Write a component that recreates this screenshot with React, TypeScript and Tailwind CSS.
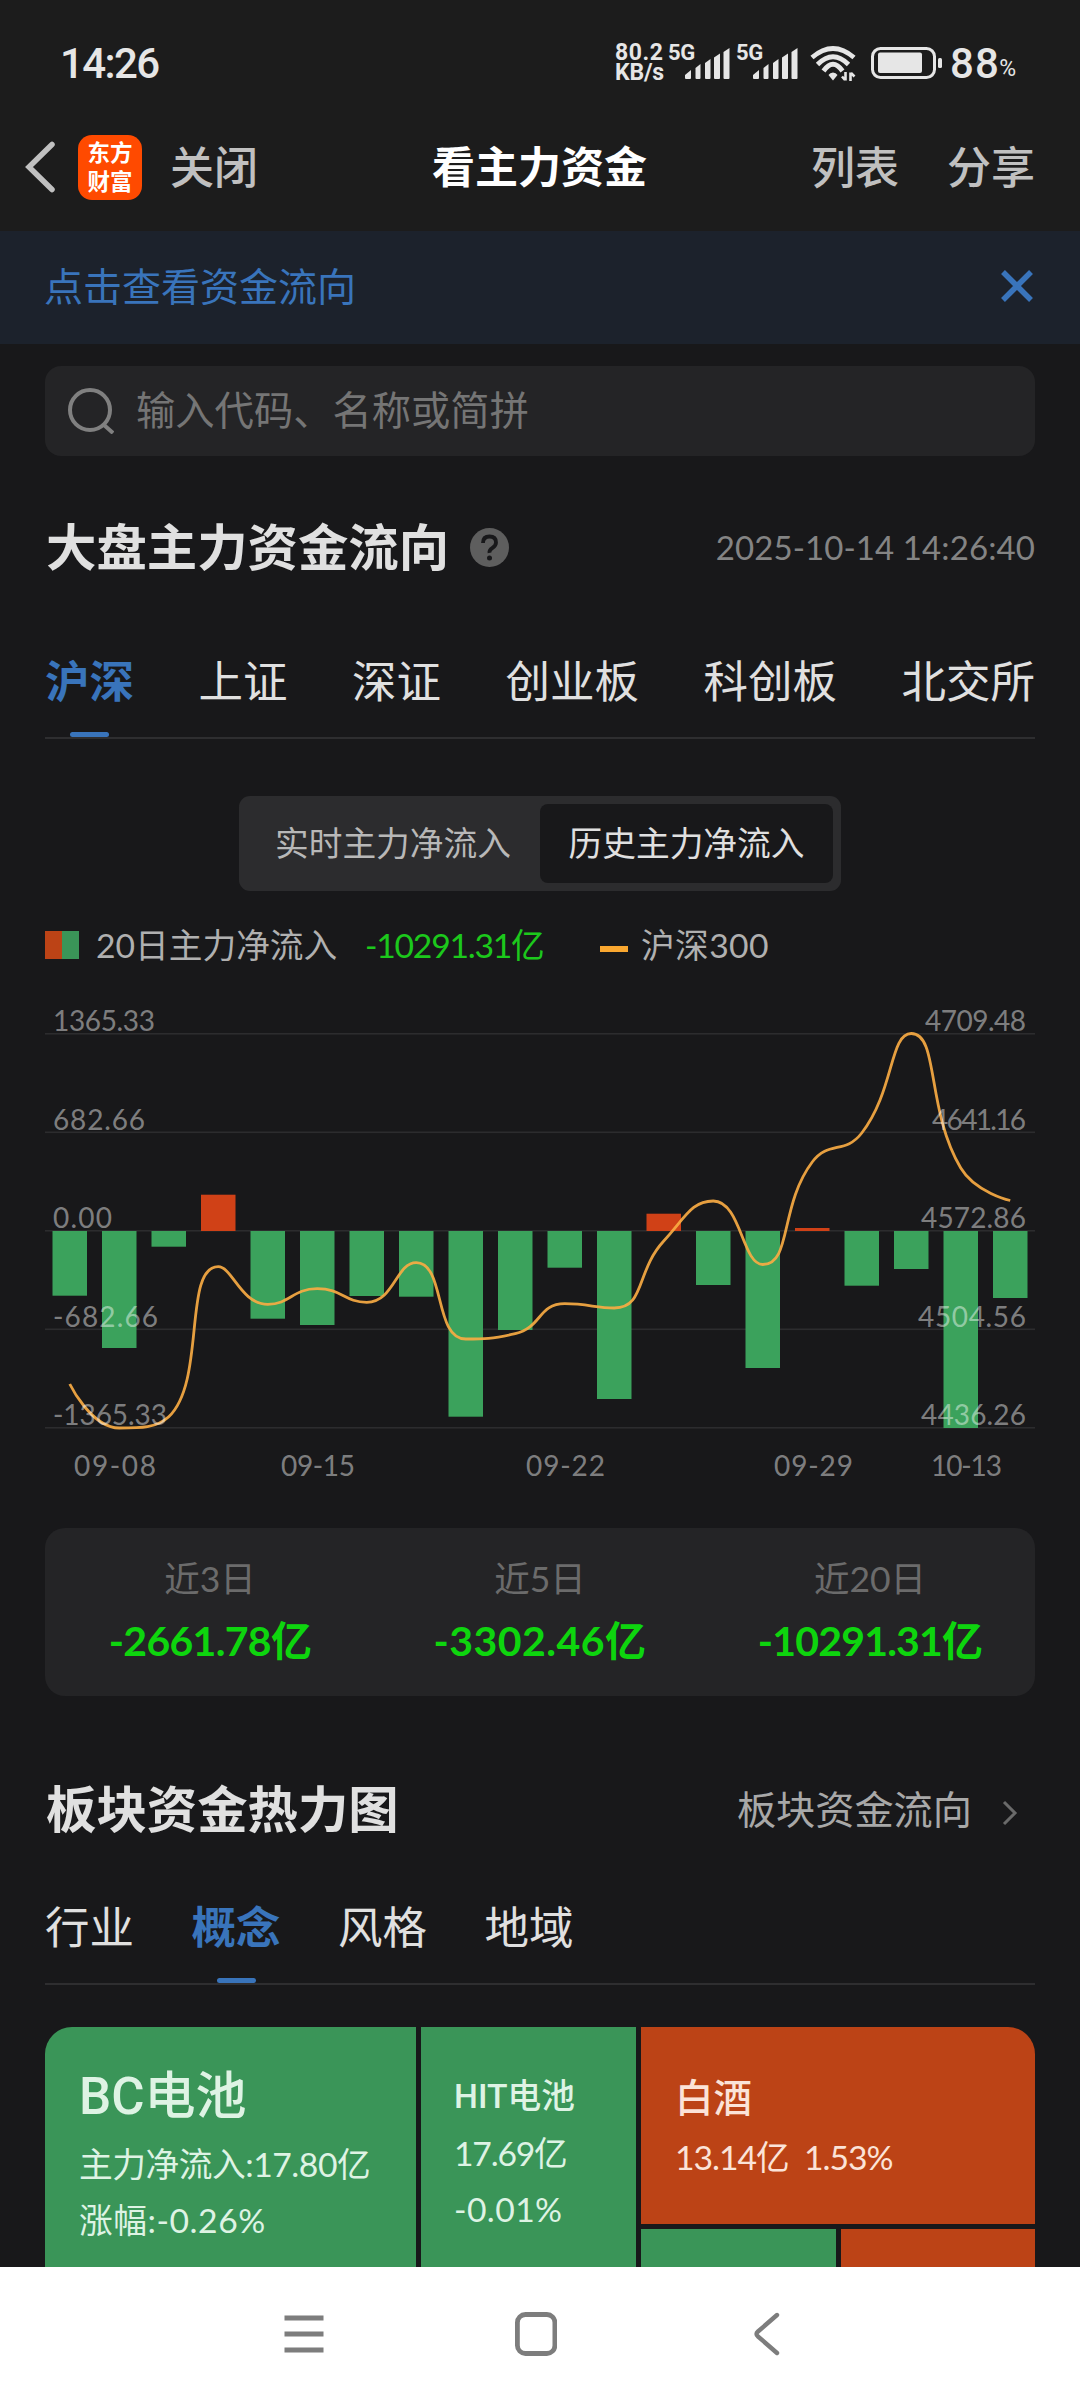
import type { ReactNode } from "react"

const FONT = "font-['Lato','Noto_Sans_CJK_SC',sans-serif]"

/* ================= STATUS BAR ================= */

function Signal() {
  return (
    <div className="flex w-[68px]">
      <span className="-mt-[1px] h-[20px] text-[22px] leading-[20px] font-bold tracking-[-0.3px]">5G</span>
      <svg className="-ml-[10px] h-[36px] w-[46px] shrink-0" viewBox="0 0 46 36" fill="#e6e6e6">
        <path d="M0 34v-3l6-5v8q0 1-1 1H1q-1 0-1-1z" />
        <path d="M10.500 24l5-4v14q0 1-1 1h-3q-1 0-1-1z" />
        <path d="M20 19l5.500-4v19q0 1-1 1H21q-1 0-1-1z" />
        <path d="M29 13.500l6-4V34q0 1-1 1h-4q-1 0-1-1z" />
        <path d="M38.500 8l6-4v30q0 1-1 1h-4q-1 0-1-1z" />
      </svg>
    </div>
  )
}

function StatusBar() {
  return (
    <div className="flex h-[103px] items-start font-['Roboto',sans-serif] text-[#e6e6e6]">
      <div className="ml-[60px] mt-[40px] w-[121px] text-[42px] leading-[48px] font-medium tracking-[-1.6px]">14:26</div>
      <div className="ml-[434px] mt-[43px] w-[53px] text-[23px] leading-[20px] font-bold">
        <div className="tracking-[0.6px]">80.2</div>
        <div className="tracking-[-0.2px]">KB/s</div>
      </div>
      <div className="mt-[44px] flex">
        <Signal />
        <Signal />
      </div>
      <svg className="ml-[6px] mt-[46px] h-[36px] w-[48px]" viewBox="0 0 48 36" fill="none" stroke="#e6e6e6" strokeWidth="4.800">
        <path d="M2 11.500Q23-6.500 44 11.500" />
        <path d="M7.500 18.500Q23 3 38.500 18.500" />
        <path d="M13.500 25Q23 11.500 32.500 25" />
        <path d="M23 26.500q3 0 4.500 2.500l-4.500 5.500-4.500-5.500q1.500-2.500 4.500-2.500z" fill="#e6e6e6" stroke="none" />
        <path d="M35.500 26v8.500M35 34l-3-3.500M40.500 35v-8.500M41 27l3.500 3.500" strokeWidth="2.600" />
      </svg>
      <svg className="ml-[13px] mt-[47px] h-[32px] w-[72px]" viewBox="0 0 72 32">
        <rect x="1.500" y="1.500" width="62" height="29" rx="8" fill="none" stroke="#e6e6e6" strokeWidth="3" />
        <rect x="7" y="5.500" width="44" height="20.500" rx="2" fill="#e6e6e6" />
        <rect x="67" y="11" width="4" height="10" rx="1.500" fill="#e6e6e6" />
      </svg>
      <div className="ml-[7px] mt-[40px] text-[42px] leading-[48px] tracking-[1.2px] font-medium">88</div>
      <div className="mt-[54px] -ml-[1px] text-[23px] leading-[30px]">%</div>
    </div>
  )
}

/* ================= HEADER ================= */

function Header() {
  return (
    <div className="flex h-[128px] items-center text-[44px] leading-[60px] font-medium text-[#c0c0c0]">
      <svg className="ml-[24px] h-[54px] w-[34px]" viewBox="0 0 34 54" fill="none" stroke="#c0c0c0" strokeWidth="5.500" strokeLinecap="round">
        <path d="M28 4.500L5 27l23 22.500" />
      </svg>
      <div className="ml-[20px] flex h-[65px] w-[64px] flex-col items-center justify-center rounded-[14px] bg-[#ff4a00] text-[22.5px] leading-[29px] font-bold text-white">
        <span>东方</span>
        <span>财富</span>
      </div>
      <div className="ml-[28px] w-[262px]">关闭</div>
      <div className="w-[379px] text-[43px] font-bold text-white">看主力资金</div>
      <div>列表</div>
      <div className="ml-[48px]">分享</div>
    </div>
  )
}

function Notice() {
  return (
    <div className="flex h-[113px] items-center justify-between bg-[#1c222c] pr-[47px] pb-[3px] pl-[44px] text-[39px] text-[#3974bb]">
      <span className="leading-[60px]">点击查看资金流向</span>
      <svg className="h-[32px] w-[32px]" viewBox="0 0 32 32" stroke="#3974bb" strokeWidth="5.500">
        <path d="M2 2l28 28M30 2L2 30" />
      </svg>
    </div>
  )
}

function SearchBox() {
  return (
    <div className="mt-[22px] flex h-[90px] items-center rounded-[16px] bg-[#242426] pl-[23px] text-[39.3px] text-[#757575]">
      <svg className="mr-[22px] h-[46px] w-[46px]" viewBox="0 0 46 46" fill="none" stroke="#808080" strokeWidth="4">
        <circle cx="22" cy="22" r="20" />
        <path d="M36 37l9 8" />
      </svg>
      <span className="pb-[3px] leading-[60px]">输入代码、名称或简拼</span>
    </div>
  )
}

/* ================= TABS ================= */

function Tabs({ items, active, className }: { items: string[]; active: string; className: string }) {
  return (
    <div className={`flex h-[82px] border-b-2 border-[#2e2e30] text-[44.5px] leading-[48px] text-[#e0e0e0] ${className}`}>
      {items.map((item) => (
        <div key={item} className={item === active ? "flex flex-col items-center justify-between font-bold text-[#3974bb]" : ""}>
          {item}
          {item === active && <span className="h-[5px] w-[39px] rounded-full bg-[#3974bb]" />}
        </div>
      ))}
    </div>
  )
}

/* ================= CHART ================= */

const ZERO = 209
// bar ends, in chart pixels
const bars = [
  273.700, 326, 224.700, 172.700, 296.700, 303, 274, 274.700, 394.700, 308,
  245.700, 377, 191.700, 263, 346, 206, 263.700, 247, 406, 276,
]
const index300 = [
  362, 406, 394.700, 244.700, 282.300, 266.700, 280.300, 240.700, 317, 311.700,
  281.700, 286, 219, 179, 242.500, 140, 111, 11.500, 146, 178.500,
]
const axis = [
  { y: 12, left: "1365.33", lw: 100, right: "4709.48", rw: 101 },
  { y: 110.500, left: "682.66", lw: 90, right: "4641.16", rw: 94 },
  { y: 209, left: "0.00", lw: 57, right: "4572.86", rw: 105 },
  { y: 307.500, left: "-682.66", lw: 103, right: "4504.56", rw: 108 },
  { y: 406, left: "-1365.33", lw: 112, right: "4436.26", rw: 105 },
]
const dates = [
  { x: 30, w: 80, text: "09-08" },
  { x: 237, w: 72, text: "09-15" },
  { x: 482, w: 77, text: "09-22" },
  { x: 730, w: 77, text: "09-29" },
  { x: 887, w: 69, text: "10-13" },
]

const clamp = (v: number, a: number, b: number) => Math.min(Math.max(v, Math.min(a, b)), Math.max(a, b))

function smoothPath(values: number[]) {
  const pts = values.map((y, i) => [24.75 + i * 49.5, y])
  const last = pts.length - 1
  let d = `M${pts[0][0]} ${pts[0][1]}`
  let out = pts[0]
  for (let i = 1; i <= last; i++) {
    const p = pts[i]
    const prev = pts[i - 1]
    let cp = p
    let nextOut = p
    if (i < last) {
      const next = pts[i + 1]
      const lenPrev = Math.hypot(p[0] - prev[0], p[1] - prev[1])
      const lenNext = Math.hypot(next[0] - p[0], next[1] - p[1])
      const ratio = lenNext / (lenNext + lenPrev)
      nextOut = [0, 1].map((k) => clamp(p[k] + (next[k] - prev[k]) * 0.5 * ratio, p[k], next[k]))
      cp = [0, 1].map((k) => clamp(p[k] - ((nextOut[k] - p[k]) * lenPrev) / lenNext, p[k], prev[k]))
      nextOut = [0, 1].map((k) => p[k] + ((p[k] - cp[k]) * lenNext) / lenPrev)
    }
    d += `C${out[0]} ${out[1]} ${cp[0]} ${cp[1]} ${p[0]} ${p[1]}`
    out = nextOut
  }
  return d
}

function FlowChart() {
  return (
    <svg className="mt-[53px] h-[470px] w-[990px] shrink-0 overflow-visible" viewBox="0 0 990 470">
      {axis.map((a) => (
        <rect key={a.y} x="0" y={a.y - 1} width="990" height="1.600" fill="#2c2c2e" />
      ))}
      {bars.map((end, i) => (
        <rect
          key={i}
          x={i * 49.5 + 7.5}
          y={Math.min(end, ZERO)}
          width="34.500"
          height={Math.abs(end - ZERO)}
          fill={end > ZERO ? "#3ba25c" : "#d04117"}
        />
      ))}
      <path d={smoothPath(index300)} fill="none" stroke="#f8ab43" strokeOpacity="0.920" strokeWidth="2.800" />
      <g fill="#fff" fillOpacity="0.460" fontSize="28">
        {axis.map((a) => (
          <g key={a.y}>
            <text x="8" y={a.y - 3} textLength={a.lw + 2}>{a.left}</text>
            <text x={982 - a.rw - 1} y={a.y - 3} textLength={a.rw}>{a.right}</text>
          </g>
        ))}
        {dates.map((date) => (
          <text key={date.text} x={date.x - 1} y="453.500" textLength={date.w + 2}>{date.text}</text>
        ))}
      </g>
    </svg>
  )
}

function Legend() {
  return (
    <div className="mt-[30px] flex h-[48px] items-center text-[33.7px] leading-[48px] text-[#b0b0b0]">
      <span className="h-[28px] w-[17px] bg-[#bc4316]" />
      <span className="mr-[17px] h-[28px] w-[17px] bg-[#3a9558]" />
      <span className="w-[269px]">20日主力净流入</span>
      <span className="w-[235px] tracking-[-1.25px] text-[#1cc81c]">-10291.31亿</span>
      <span className="mt-[8px] mr-[13px] h-[6px] w-[28px] bg-[#f9a730]" />
      <span className="tracking-[0.4px]">沪深300</span>
    </div>
  )
}

/* ================= STATS ================= */

function Stat({ label, value, tracking }: { label: string; value: string; tracking: string }) {
  return (
    <div className="flex w-[330px] flex-col items-center">
      <span className="text-[35.5px] leading-[50px] text-[#6b6b6b]">{label}</span>
      <span className={`mt-[10px] text-[41px] leading-[54px] font-bold text-[#0ed50e] ${tracking}`}>{value}</span>
    </div>
  )
}

/* ================= HEAT MAP ================= */

function Tile({ className, children }: { className: string; children?: ReactNode }) {
  return <div className={`flex flex-col items-start whitespace-pre text-[33.7px] leading-[56px] ${className}`}>{children}</div>
}

function HeatMap() {
  return (
    <div className="mt-[42px] flex h-[240px] gap-[5px] overflow-hidden rounded-t-[27px]">
      <Tile className="w-[371px] bg-[#3a9558] pt-[42px] pl-[34px] text-[#def3e4]">
        <span className="font-['Roboto','Noto_Sans_CJK_SC',sans-serif] text-[51px] font-medium">BC电池</span>
        <span className="mt-[11px] tracking-[-0.45px]">主力净流入:17.80亿</span>
        <span className="tracking-[0.55px]">涨幅:-0.26%</span>
      </Tile>
      <Tile className="w-[215px] bg-[#3a9558] pt-[42px] pl-[33px] text-[#def3e4]">
        <span className="font-['Roboto','Noto_Sans_CJK_SC',sans-serif] font-medium">HIT电池</span>
        <span className="tracking-[-1.2px]">17.69亿</span>
        <span className="tracking-[0.4px]">-0.01%</span>
      </Tile>
      <div className="flex w-[394px] flex-col gap-[5px]">
        <Tile className="h-[197px] bg-[#bc4316] pt-[42px] pl-[34px] text-[#fbe3d8]">
          <span className="text-[38.5px] font-medium">白酒</span>
          <span className="mt-[4px] tracking-[-1px]">13.14亿  1.53%</span>
        </Tile>
        <div className="flex flex-1 gap-[5px]">
          <div className="w-[195px] bg-[#3a9558]" />
          <div className="flex-1 bg-[#bc4316]" />
        </div>
      </div>
    </div>
  )
}

function NavBar() {
  return (
    <div className="flex h-[133px] shrink-0 items-center bg-white">
      <svg className="ml-[284px] h-[44px] w-[40px]" viewBox="0 0 40 44" stroke="#7d7d7d" strokeWidth="5">
        <path d="M0.500 6h39M0.500 22h39M0.500 38h39" />
      </svg>
      <svg className="ml-[191px] h-[44px] w-[42px]" viewBox="0 0 42 44" fill="none" stroke="#7d7d7d" strokeWidth="4.800">
        <rect x="2.400" y="2.500" width="37.500" height="39" rx="8" />
      </svg>
      <svg className="ml-[196px] h-[44px] w-[28px]" viewBox="0 0 28 44" fill="none" stroke="#7d7d7d" strokeWidth="4.400" strokeLinecap="round">
        <path d="M24 3L5 19.500q-3 2.500 0 5L24 41" />
      </svg>
    </div>
  )
}

export default function App() {
  return (
    <div className={`flex h-[2400px] w-[1080px] flex-col overflow-hidden bg-[#18181a] ${FONT}`}>
      <div className="bg-[#1c1c1c]">
        <StatusBar />
        <Header />
      </div>
      <Notice />

      <div className="flex min-h-0 flex-1 flex-col overflow-hidden px-[45px]">
        <SearchBox />

        {/* MARKET FLOW */}
        <div className="mt-[61px] flex h-[60px] items-center">
          <h2 className="pl-[1px] text-[50.4px] leading-[60px] font-bold text-[#e0e0e0]">大盘主力资金流向</h2>
          <svg className="ml-[21px] h-[39px] w-[39px]" viewBox="0 0 39 39" fill="none" stroke="#18181a" strokeWidth="3.800">
            <circle cx="19.500" cy="19.500" r="19.500" fill="#5e5e5e" stroke="none" />
            <path d="M13 15q0-6.500 6.500-6.500T26 14.500q0 3-3.500 5.300t-3 5" />
            <circle cx="19.500" cy="30" r="2.500" fill="#18181a" stroke="none" />
          </svg>
          <span className="mt-[2px] ml-auto text-[33px] tracking-[0.1px] text-[#848484]">2025-10-14 14:26:40</span>
        </div>
        <Tabs
          items={["沪深", "上证", "深证", "创业板", "科创板", "北交所"]}
          active="沪深"
          className="mt-[80px] justify-between"
        />

        <div className="mt-[57px] flex h-[95px] w-[602px] shrink-0 items-center self-center rounded-[11px] bg-[#2c2c2e] p-[8px] text-[33.7px] text-[#b8b8b8]">
          <div className="w-[293px] pl-[28px]">实时主力净流入</div>
          <div className="flex h-full w-[293px] items-center justify-center rounded-[8px] bg-[#18181a] text-[#e0e0e0]">
            历史主力净流入
          </div>
        </div>
        <Legend />
        <FlowChart />

        <div className="mt-[36px] flex h-[168px] shrink-0 rounded-[20px] bg-[#242426] pt-[26px]">
          <Stat label="近3日" value="-2661.78亿" tracking="tracking-[-0.7px]" />
          <Stat label="近5日" value="-3302.46亿" tracking="tracking-[0.5px]" />
          <Stat label="近20日" value="-10291.31亿" tracking="tracking-[-0.8px]" />
        </div>

        {/* SECTOR HEAT MAP */}
        <div className="mt-[83px] flex h-[60px] shrink-0 items-center">
          <h2 className="pl-[1px] text-[50.4px] leading-[60px] font-bold text-[#e0e0e0]">板块资金热力图</h2>
          <span className="ml-auto text-[39.2px] leading-[60px] text-[#a8a8a8]">板块资金流向</span>
          <svg className="mt-[8px] mr-[17px] ml-[30px] h-[26px] w-[16px]" viewBox="0 0 16 26" fill="none" stroke="#6a6a6a" strokeWidth="3">
            <path d="M2 2l11 11L2 24" />
          </svg>
        </div>
        <Tabs items={["行业", "概念", "风格", "地域"]} active="概念" className="mt-[64px] shrink-0 gap-[57.5px]" />
        <HeatMap />
      </div>

      <NavBar />
    </div>
  )
}
